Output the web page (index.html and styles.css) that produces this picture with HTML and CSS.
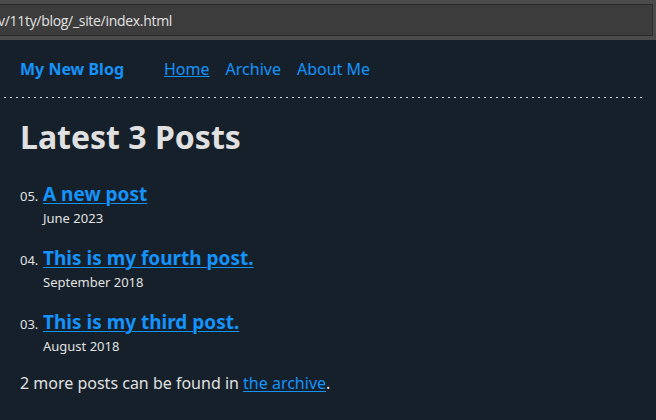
FILE: index.html
```html
<!DOCTYPE html>
<html lang="en">
<head>
<meta charset="utf-8">
<title>My New Blog</title>
<link rel="stylesheet" href="styles.css">
</head>
<body>
<div class="chrome">
  <div class="chrome-top"></div>
  <div class="urlbar"><span class="url">v/11ty/blog/_site/index.html</span></div>
  <div class="chrome-bottom"></div>
</div>
<div class="page">
  <header class="site-header">
    <a class="home-link" href="#">My New Blog</a>
    <ul class="nav">
      <li class="nav-item"><a class="current" href="#">Home</a></li>
      <li class="nav-item"><a href="#">Archive</a></li>
      <li class="nav-item"><a href="#">About Me</a></li>
    </ul>
  </header>
  <main class="main">
    <h1 class="title">Latest 3 Posts</h1>
    <ol class="postlist">
      <li class="postlist-item">
        <span class="num">05.</span>
        <a class="postlist-link" href="#">A new post</a>
        <time class="postlist-date">June 2023</time>
      </li>
      <li class="postlist-item">
        <span class="num">04.</span>
        <a class="postlist-link" href="#">This is my fourth post.</a>
        <time class="postlist-date">September 2018</time>
      </li>
      <li class="postlist-item">
        <span class="num">03.</span>
        <a class="postlist-link" href="#">This is my third post.</a>
        <time class="postlist-date">August 2018</time>
      </li>
    </ol>
    <p class="more">2 more posts can be found in <a href="#">the archive</a>.</p>
  </main>
</div>
</body>
</html>
```
FILE: styles.css
```css
* { box-sizing: border-box; }
html, body {
  margin: 0;
  padding: 0;
  height: 100%;
}
body {
  background: #15202b;
  color: #e0e0e0;
  font-family: "Noto Sans", "Open Sans", sans-serif;
  font-size: 16px;
  overflow: hidden;
}
a { color: #1493fb; }

.chrome {
  height: 40px;
  background: #4b4b4b;
  display: flex;
  flex-direction: column;
}
.chrome-top { height: 4px; flex: none; }
.urlbar {
  height: 32px;
  flex: none;
  width: 653px;
  background: #3c3c3c;
  border-top: 1px solid #2a2a2a;
  border-bottom: 1px solid #2a2a2a;
  border-right: 1px solid #2a2a2a;
  display: flex;
  align-items: center;
}
.url {
  color: #e2e2e2;
  font-size: 14px;
  font-family: "Open Sans", "Noto Sans", sans-serif;
  letter-spacing: -0.3px;
  margin-left: -2px;
}

.page {
  width: 640px;
  margin-left: 4px;
}
.site-header {
  display: flex;
  align-items: center;
  padding: 17px 16px;
  line-height: 24px;
  background-image: linear-gradient(to right, #d6dbe0 2px, transparent 2px);
  background-size: 6px 1px;
  background-repeat: repeat-x;
  background-position: 0 100%;
}
.home-link {
  font-weight: 700;
  text-decoration: none;
  margin-right: 40px;
}
.nav {
  display: flex;
  list-style: none;
  margin: 0;
  padding: 0;
  gap: 16px;
}
.nav a { text-decoration: none; }
.nav a.current { text-decoration: underline; }

.main { padding: 0 16px; }
.title {
  font-size: 32px;
  font-weight: 700;
  line-height: 1.2;
  margin: 20px 0 26px;
}
.postlist {
  list-style: none;
  margin: 0;
  padding: 0;
}
.postlist-item {
  display: flex;
  flex-wrap: wrap;
  align-items: baseline;
  margin-bottom: 17px;
}
.postlist-item:last-child { margin-bottom: 14px; }
.num {
  font-size: 13px;
  width: 23px;
}
.postlist-link {
  font-size: 19px;
  font-weight: 700;
  flex-basis: calc(100% - 24px);
  line-height: 24px;
  text-decoration-thickness: 1px;
  text-underline-offset: 2px;
}
.postlist-date {
  font-size: 13px;
  margin-left: 23px;
  padding-top: 1px;
  line-height: 22px;
}
.more {
  margin: 0;
  line-height: 24px;
}
.more a { text-underline-offset: 2px; }
```
